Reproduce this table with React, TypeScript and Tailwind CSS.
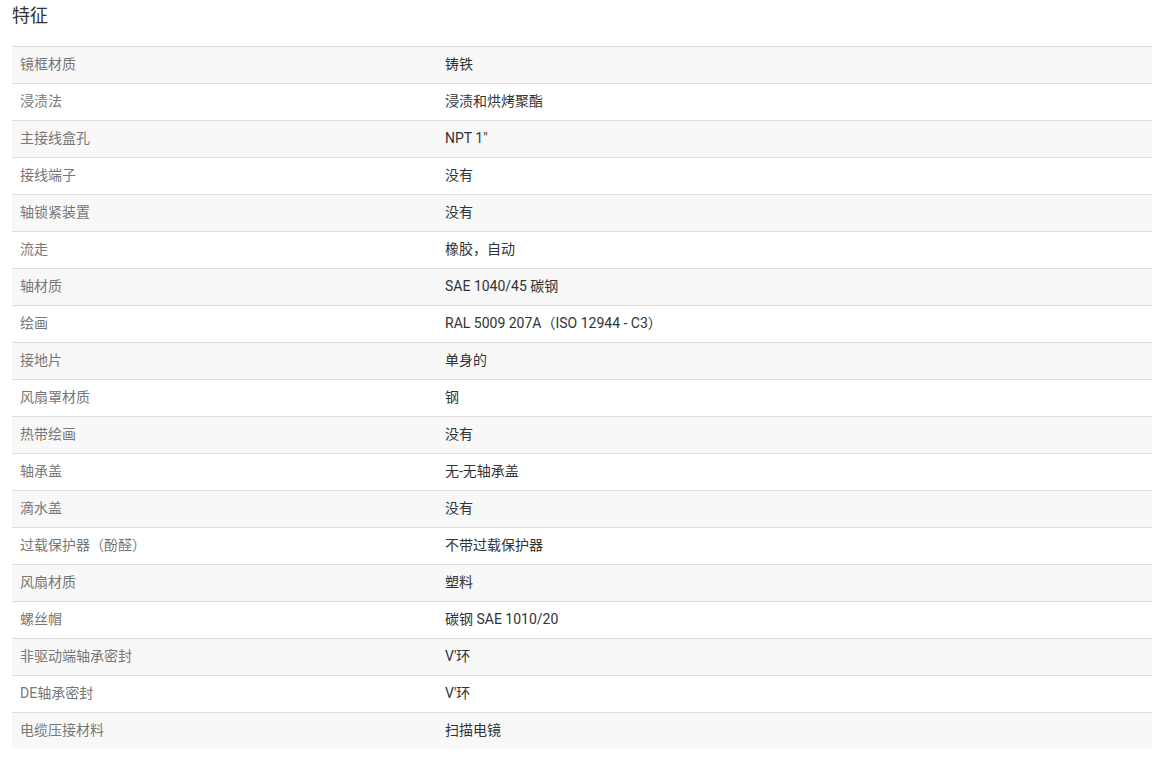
import React from "react";

const rows: [string, string][] = [
  ["镜框材质", "铸铁"],
  ["浸渍法", "浸渍和烘烤聚酯"],
  ["主接线盒孔", "NPT 1\""],
  ["接线端子", "没有"],
  ["轴锁紧装置", "没有"],
  ["流走", "橡胶，自动"],
  ["轴材质", "SAE 1040/45 碳钢"],
  ["绘画", "RAL 5009 207A（ISO 12944 - C3）"],
  ["接地片", "单身的"],
  ["风扇罩材质", "钢"],
  ["热带绘画", "没有"],
  ["轴承盖", "无-无轴承盖"],
  ["滴水盖", "没有"],
  ["过载保护器（酚醛）", "不带过载保护器"],
  ["风扇材质", "塑料"],
  ["螺丝帽", "碳钢 SAE 1010/20"],
  ["非驱动端轴承密封", "V'环"],
  ["DE轴承密封", "V'环"],
  ["电缆压接材料", "扫描电镜"],
];

export default function App() {
  return (
    <div
      className="w-[1162px] h-[770px] bg-white px-[12px] pt-[4px]"
      style={{ fontFamily: 'Roboto, "Noto Sans CJK SC", sans-serif' }}
    >
      <h2 className="text-[18px] leading-[24px] text-[#333] font-normal">特征</h2>
      <div className="mt-[18px] w-[1140px] flex flex-col">
        {rows.map(([k, v], i) => (
          <div
            key={i}
            className={`flex h-[37px] border-t border-[#dddddd] items-center pb-[2px] text-[14px] ${
              i % 2 === 0 ? "bg-[#f8f8f8]" : "bg-white"
            }`}
          >
            <div className="w-[425px] pl-[8px] text-[#777]">{k}</div>
            <div className="flex-1 pl-[8px] text-[#333]">{v}</div>
          </div>
        ))}
      </div>
    </div>
  );
}
